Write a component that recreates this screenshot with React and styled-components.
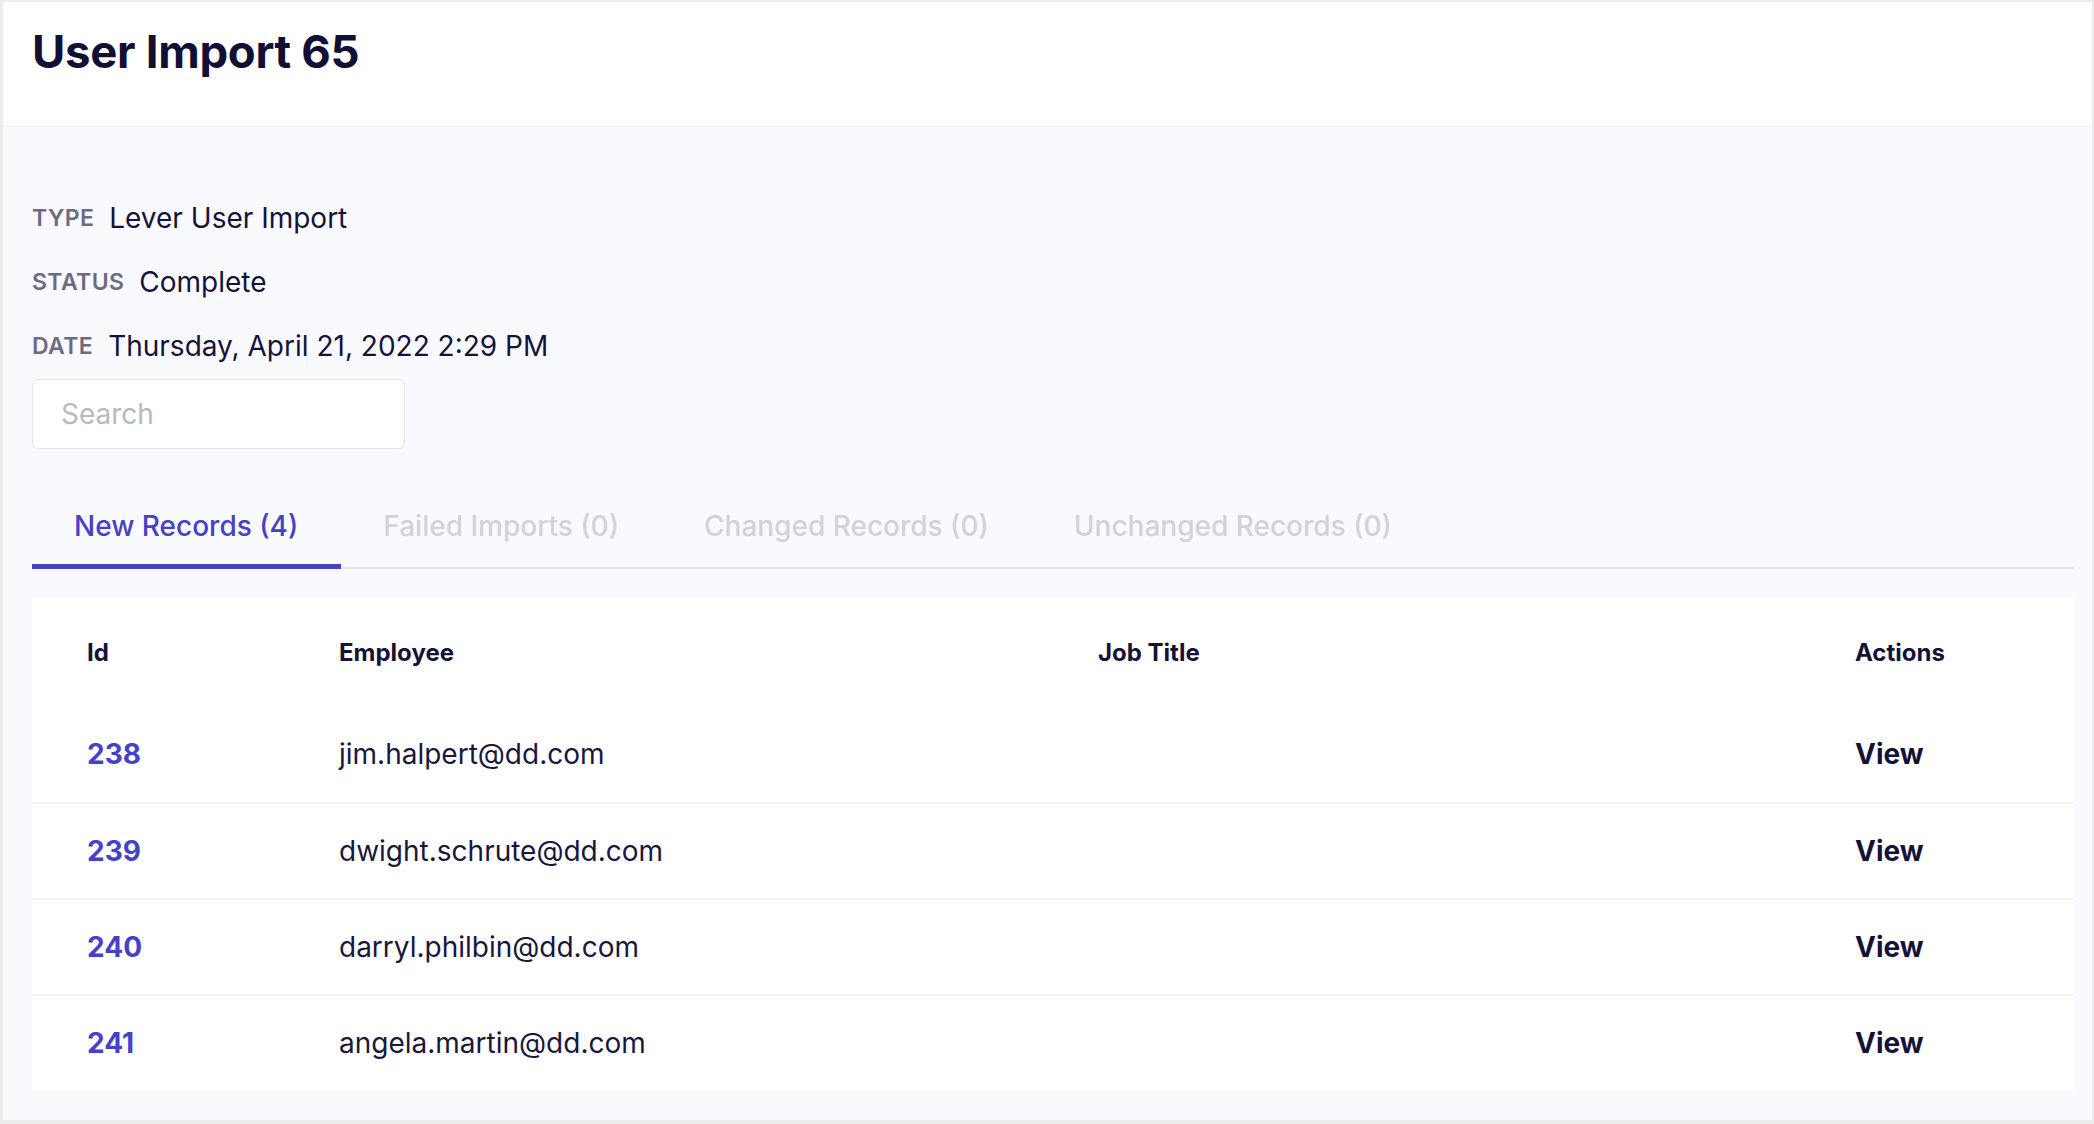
import React from "react";
import styled, { createGlobalStyle } from "styled-components";

const GlobalStyle = createGlobalStyle`
  html, body {
    margin: 0;
    padding: 0;
    background: #ececec;
    font-family: Inter, "Noto Sans", "Liberation Sans", sans-serif;
  }
  * {
    box-sizing: border-box;
  }
`;

const Frame = styled.div`
  height: 1124px;
  padding: 2px 2px 4px 3px;
  display: flex;
`;

const Page = styled.div`
  flex: 1;
  display: flex;
  flex-direction: column;
  background: #f9fafd;
`;

const Header = styled.header`
  height: 125px;
  background: #ffffff;
  display: flex;
  align-items: center;
  padding: 0 29px 26px;
  border-bottom: 1px solid #f1f2f6;
`;

const Title = styled.h1`
  margin: 0;
  font-size: 45.5px;
  font-weight: 700;
  color: #120f35;
  letter-spacing: -0.3px;
`;

const Content = styled.main`
  flex: 1;
  padding: 59px 18px 0 29px;
  display: flex;
  flex-direction: column;
`;

const MetaRow = styled.div`
  height: 64px;
  display: flex;
  align-items: center;
  gap: 15px;
`;

const MetaLabel = styled.span`
  font-size: 23px;
  font-weight: 600;
  color: #6c6a84;
  text-transform: uppercase;
  letter-spacing: 0.4px;
`;

const MetaValue = styled.span`
  font-size: 28px;
  color: #16133a;
`;

const SearchInput = styled.input`
  width: 373px;
  height: 70px;
  margin-top: 1px;
  padding: 0 28px;
  border: 1px solid #e4e4ea;
  border-radius: 6px;
  background: #ffffff;
  font-family: inherit;
  font-size: 28px;
  color: #16133a;
  outline: none;

  &::placeholder {
    color: #b9b9c2;
  }
`;

const TabBar = styled.nav`
  margin-top: 35px;
  display: flex;
  border-bottom: 2px solid #e3e4ea;
`;

const Tab = styled.button`
  padding: 25px 43px 21px 42px;
  margin-bottom: -2px;
  border: none;
  background: none;
  font-family: inherit;
  font-size: 28px;
  font-weight: 500;
  color: ${(p) => (p.$active ? "#4641c6" : "#d2d2da")};
  border-bottom: 5px solid ${(p) => (p.$active ? "#4641c6" : "transparent")};
  cursor: pointer;
`;

const TableCard = styled.section`
  margin-top: 29px;
  background: #ffffff;
`;

const Row = styled.div`
  display: grid;
  grid-template-columns: 252px 759px 757px 1fr;
  align-items: center;
  padding-left: 55px;
  height: ${(p) => (p.$head ? "108px" : "96px")};
  border-top: ${(p) => (p.$divided ? "2px solid #f5f5f8" : "none")};
`;

const HeadCell = styled.div`
  font-size: 24px;
  font-weight: 700;
  color: #15123a;
`;

const Cell = styled.div`
  font-size: 28px;
  color: #1a173d;
`;

const IdLink = styled.a`
  font-size: 28px;
  font-weight: 700;
  color: #4641c6;
  text-decoration: none;
`;

const ViewLink = styled.a`
  font-size: 28px;
  font-weight: 700;
  color: #15123a;
  text-decoration: none;
  cursor: pointer;
`;

const meta = [
  ["Type", "Lever User Import"],
  ["Status", "Complete"],
  ["Date", "Thursday, April 21, 2022 2:29 PM"],
];

const tabs = [
  "New Records (4)",
  "Failed Imports (0)",
  "Changed Records (0)",
  "Unchanged Records (0)",
];

const records = [
  { id: 238, email: "jim.halpert@dd.com" },
  { id: 239, email: "dwight.schrute@dd.com" },
  { id: 240, email: "darryl.philbin@dd.com" },
  { id: 241, email: "angela.martin@dd.com" },
];

const App = () => {
  return (
    <>
      <GlobalStyle />
      <Frame>
        <Page>
          <Header>
            <Title>User Import 65</Title>
          </Header>
          <Content>
            {meta.map(([label, value]) => (
              <MetaRow key={label}>
                <MetaLabel>{label}</MetaLabel>
                <MetaValue>{value}</MetaValue>
              </MetaRow>
            ))}
            <SearchInput placeholder="Search" />
            <TabBar>
              {tabs.map((t, i) => (
                <Tab key={t} $active={i === 0}>
                  {t}
                </Tab>
              ))}
            </TabBar>
            <TableCard>
              <Row $head>
                <HeadCell>Id</HeadCell>
                <HeadCell>Employee</HeadCell>
                <HeadCell>Job Title</HeadCell>
                <HeadCell>Actions</HeadCell>
              </Row>
              {records.map((r, i) => (
                <Row key={r.id} $divided={i > 0}>
                  <IdLink href="#">{r.id}</IdLink>
                  <Cell>{r.email}</Cell>
                  <Cell />
                  <ViewLink>View</ViewLink>
                </Row>
              ))}
            </TableCard>
          </Content>
        </Page>
      </Frame>
    </>
  );
};

export default App;
